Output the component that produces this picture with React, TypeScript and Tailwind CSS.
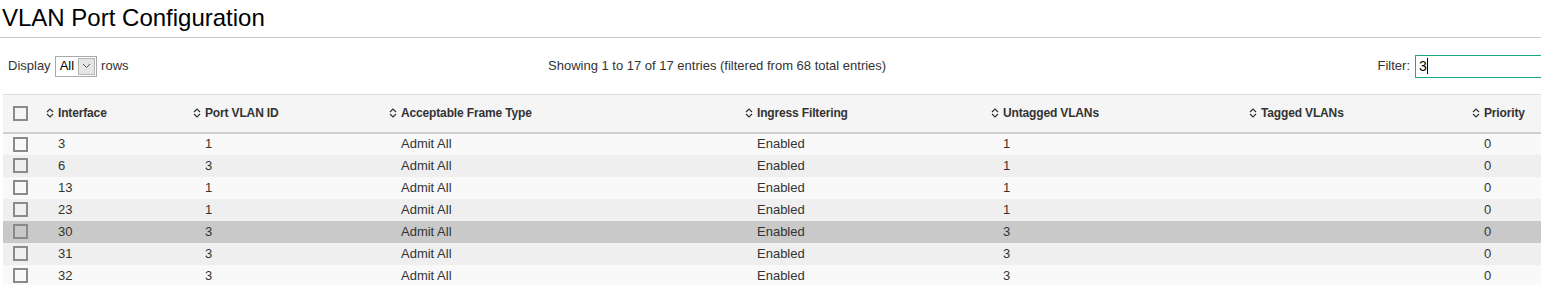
import React from "react";

const ROWS = [
  { iface: "3", pvid: "1", frame: "Admit All", ingress: "Enabled", untagged: "1", tagged: "", priority: "0" },
  { iface: "6", pvid: "3", frame: "Admit All", ingress: "Enabled", untagged: "1", tagged: "", priority: "0" },
  { iface: "13", pvid: "1", frame: "Admit All", ingress: "Enabled", untagged: "1", tagged: "", priority: "0" },
  { iface: "23", pvid: "1", frame: "Admit All", ingress: "Enabled", untagged: "1", tagged: "", priority: "0" },
  { iface: "30", pvid: "3", frame: "Admit All", ingress: "Enabled", untagged: "3", tagged: "", priority: "0" },
  { iface: "31", pvid: "3", frame: "Admit All", ingress: "Enabled", untagged: "3", tagged: "", priority: "0" },
  { iface: "32", pvid: "3", frame: "Admit All", ingress: "Enabled", untagged: "3", tagged: "", priority: "0" },
];

const COLUMNS = [
  "Interface",
  "Port VLAN ID",
  "Acceptable Frame Type",
  "Ingress Filtering",
  "Untagged VLANs",
  "Tagged VLANs",
  "Priority",
];

function SortIcon() {
  return (
    <svg width="8" height="10" viewBox="0 0 8 10" className="shrink-0" aria-hidden="true">
      <path d="M1 4 L4 1 L7 4" fill="none" stroke="#333" strokeWidth="1.2" />
      <path d="M1 6 L4 9 L7 6" fill="none" stroke="#333" strokeWidth="1.2" />
    </svg>
  );
}

function Checkbox() {
  return <div className="w-[15px] h-[15px] border-2 border-[#8a8a8a]" />;
}

export default function App() {
  const selected = 4;

  return (
    <div className="w-[1541px] h-[285px] overflow-hidden bg-white text-[#333] font-['Liberation_Sans',Arial,sans-serif]">
      <div className="border-b border-[#c8c8c8] pt-[3px] pb-[5px] pl-[2px]">
        <h1 className="text-[24px] leading-[29px] text-black">VLAN Port Configuration</h1>
      </div>

      <div className="flex items-center h-[56px] text-[13px]">
        <div className="flex items-center pl-[8px] w-[540px]">
          <span>Display</span>
          <div className="flex items-center h-[21px] ml-[4px] border border-[#a9a9a9] bg-white">
            <span className="px-[4px] text-black">All</span>
            <div className="flex items-center justify-center w-[17px] h-[17px] mr-[1px] bg-[#e5e5e5] border border-[#b5b5b5]">
              <svg width="9" height="6" viewBox="0 0 9 6" aria-hidden="true">
                <path d="M1 1 L4.5 4.5 L8 1" fill="none" stroke="#555" strokeWidth="1" />
              </svg>
            </div>
          </div>
          <span className="ml-[4px]">rows</span>
        </div>
        <div className="ml-[8px]">Showing 1 to 17 of 17 entries (filtered from 68 total entries)</div>
        <div className="flex items-center ml-auto mr-[-16px]">
          <span>Filter:</span>
          <div className="flex items-center ml-[5px] w-[142px] h-[23px] border border-[#1aa987] pl-[3px] text-[14px] text-black">
            3<span className="w-px h-[16px] bg-black" />
          </div>
        </div>
      </div>

      <table className="ml-[3px] w-[1538px] table-fixed border-collapse">
        <colgroup>
          <col className="w-[41px]" />
          <col className="w-[147px]" />
          <col className="w-[196px]" />
          <col className="w-[356px]" />
          <col className="w-[246px]" />
          <col className="w-[258px]" />
          <col className="w-[223px]" />
          <col className="w-[71px]" />
        </colgroup>
        <thead>
          <tr className="bg-[#f5f5f5] border-t border-[#dcdcdc] border-b-2 border-b-[#d0d0d0] h-[38px]">
            <th className="pl-[10px] align-middle">
              <Checkbox />
            </th>
            {COLUMNS.map((c) => (
              <th key={c} className="pl-[2px] text-left align-middle">
                <div className="flex items-center gap-[4px] text-[12px] tracking-[-0.15px] font-bold text-[#333] whitespace-nowrap">
                  <SortIcon />
                  <span>{c}</span>
                </div>
              </th>
            ))}
          </tr>
        </thead>
        <tbody className="text-[13px]">
          {ROWS.map((r, i) => (
            <tr
              key={r.iface}
              className={`h-[22px] ${
                i === selected ? "bg-[#c9c9c9]" : i % 2 === 0 ? "bg-[#f9f9f9]" : "bg-[#efefef]"
              }`}
            >
              <td className="pl-[10px] align-middle">
                <Checkbox />
              </td>
              <td className="pl-[14px]">{r.iface}</td>
              <td className="pl-[14px]">{r.pvid}</td>
              <td className="pl-[14px]">{r.frame}</td>
              <td className="pl-[14px]">{r.ingress}</td>
              <td className="pl-[14px]">{r.untagged}</td>
              <td className="pl-[14px]">{r.tagged}</td>
              <td className="pl-[14px]">{r.priority}</td>
            </tr>
          ))}
        </tbody>
      </table>
    </div>
  );
}
